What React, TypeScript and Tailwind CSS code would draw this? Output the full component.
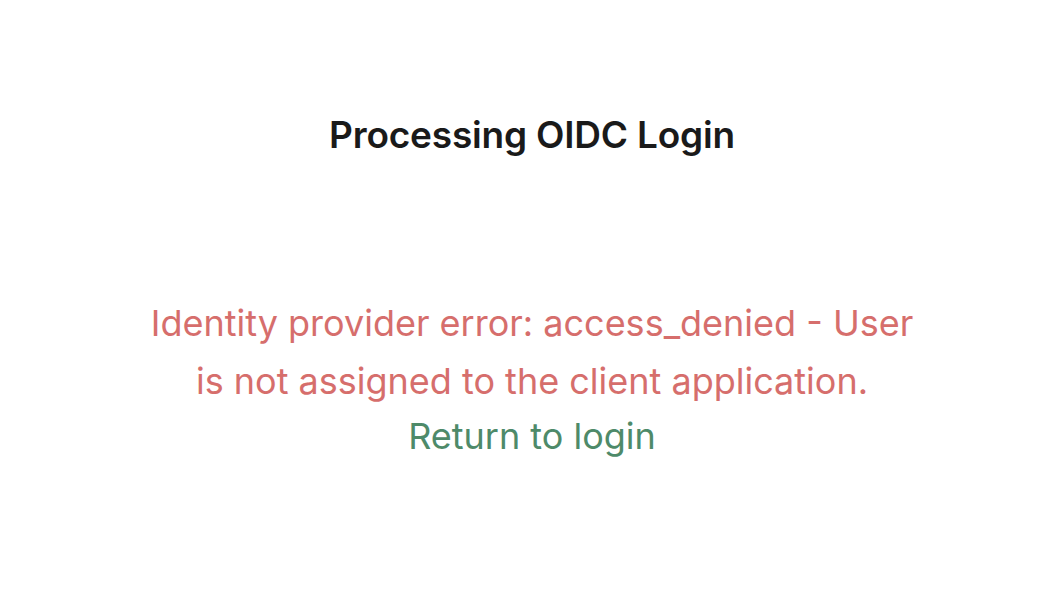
import React from "react";

export default function App() {
  return (
    <div
      className="w-full h-[596px] bg-white flex flex-col items-center"
      style={{ fontFamily: "Inter, 'Noto Sans', sans-serif" }}
    >
      <h1 className="mt-[112px] text-[37px] leading-[46px] font-semibold text-[#1a1a1a] tracking-[-0.2px]">
        Processing OIDC Login
      </h1>
      <div className="mt-[136px] w-[780px] flex flex-col items-center text-center">
        <p className="text-[36px] leading-[58px] text-[#d66e6c]">
          Identity provider error: access_denied - User is not assigned to the client application.
        </p>
        <a href="#" className="text-[36px] leading-[52px] text-[#4e8a69]">
          Return to login
        </a>
      </div>
    </div>
  );
}
